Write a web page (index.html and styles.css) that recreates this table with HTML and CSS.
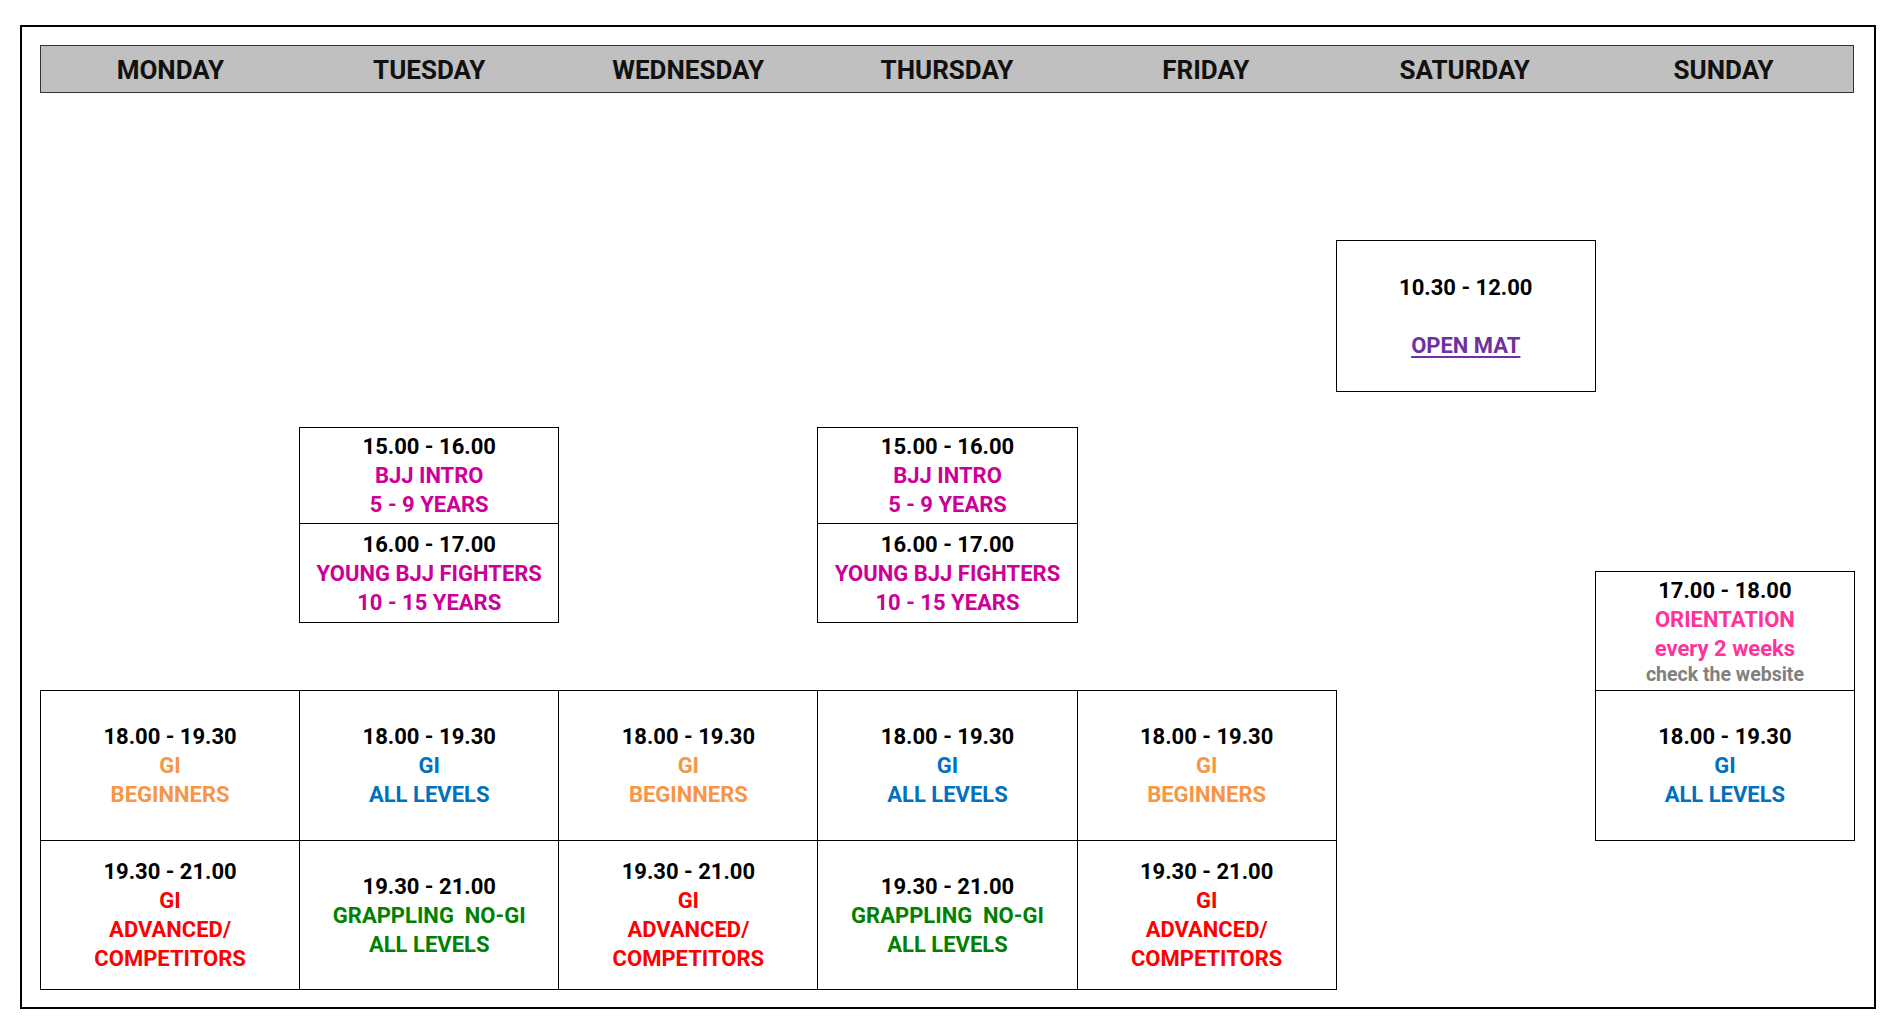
FILE: index.html
```html
<!DOCTYPE html>
<html lang="en">
<head>
<meta charset="utf-8">
<title>Timetable</title>
<link rel="stylesheet" href="styles.css">
</head>
<body>
<div class="frame">
  <div class="timetable">
    <div class="days">
      <div class="day">MONDAY</div>
      <div class="day">TUESDAY</div>
      <div class="day">WEDNESDAY</div>
      <div class="day">THURSDAY</div>
      <div class="day">FRIDAY</div>
      <div class="day">SATURDAY</div>
      <div class="day">SUNDAY</div>
    </div>

    <div class="cell sat s1030">
      <div class="time">10.30 - 12.00</div>
      <a class="open-mat">OPEN MAT</a>
    </div>

    <div class="cell tue s1500">
      <div class="time">15.00 - 16.00</div>
      <div class="kids">BJJ INTRO</div>
      <div class="kids">5 - 9 YEARS</div>
    </div>
    <div class="cell tue s1600">
      <div class="time">16.00 - 17.00</div>
      <div class="kids">YOUNG BJJ FIGHTERS</div>
      <div class="kids">10 - 15 YEARS</div>
    </div>
    <div class="cell thu s1500">
      <div class="time">15.00 - 16.00</div>
      <div class="kids">BJJ INTRO</div>
      <div class="kids">5 - 9 YEARS</div>
    </div>
    <div class="cell thu s1600">
      <div class="time">16.00 - 17.00</div>
      <div class="kids">YOUNG BJJ FIGHTERS</div>
      <div class="kids">10 - 15 YEARS</div>
    </div>

    <div class="cell sun s1700">
      <div class="time">17.00 - 18.00</div>
      <div class="orient">ORIENTATION</div>
      <div class="orient">every 2 weeks</div>
      <div class="note">check the website</div>
    </div>

    <div class="cell mon s1800">
      <div class="time">18.00 - 19.30</div>
      <div class="beg">GI</div>
      <div class="beg">BEGINNERS</div>
    </div>
    <div class="cell tue s1800">
      <div class="time">18.00 - 19.30</div>
      <div class="all">GI</div>
      <div class="all">ALL LEVELS</div>
    </div>
    <div class="cell wed s1800">
      <div class="time">18.00 - 19.30</div>
      <div class="beg">GI</div>
      <div class="beg">BEGINNERS</div>
    </div>
    <div class="cell thu s1800">
      <div class="time">18.00 - 19.30</div>
      <div class="all">GI</div>
      <div class="all">ALL LEVELS</div>
    </div>
    <div class="cell fri s1800">
      <div class="time">18.00 - 19.30</div>
      <div class="beg">GI</div>
      <div class="beg">BEGINNERS</div>
    </div>
    <div class="cell sun s1800">
      <div class="time">18.00 - 19.30</div>
      <div class="all">GI</div>
      <div class="all">ALL LEVELS</div>
    </div>

    <div class="cell mon s1930">
      <div class="time">19.30 - 21.00</div>
      <div class="adv">GI</div>
      <div class="adv">ADVANCED/</div>
      <div class="adv">COMPETITORS</div>
    </div>
    <div class="cell tue s1930">
      <div class="time">19.30 - 21.00</div>
      <div class="nogi">GRAPPLING&nbsp; NO-GI</div>
      <div class="nogi">ALL LEVELS</div>
    </div>
    <div class="cell wed s1930">
      <div class="time">19.30 - 21.00</div>
      <div class="adv">GI</div>
      <div class="adv">ADVANCED/</div>
      <div class="adv">COMPETITORS</div>
    </div>
    <div class="cell thu s1930">
      <div class="time">19.30 - 21.00</div>
      <div class="nogi">GRAPPLING&nbsp; NO-GI</div>
      <div class="nogi">ALL LEVELS</div>
    </div>
    <div class="cell fri s1930">
      <div class="time">19.30 - 21.00</div>
      <div class="adv">GI</div>
      <div class="adv">ADVANCED/</div>
      <div class="adv">COMPETITORS</div>
    </div>
  </div>
</div>
</body>
</html>
```

FILE: styles.css
```css
html, body {
  margin: 0;
  padding: 0;
  background: #fff;
}

body {
  font-family: Roboto, "Liberation Sans", sans-serif;
  font-weight: 700;
  color: #000;
}

.frame {
  margin: 25px 0 0 20px;
  width: 1815px;
  padding: 18px 19px 18px 18px;
  border: 2px solid #000;
}

.timetable {
  display: grid;
  grid-template-columns: repeat(7, 1fr);
  grid-template-rows: 48px 147px 151px 36px 96px 48px 51px 68px 150px 149px;
  width: 1814px;
}

.days {
  grid-column: 1 / -1;
  grid-row: 1;
  display: grid;
  grid-template-columns: repeat(7, 1fr);
  align-items: center;
  background: #bfc0bf;
  border: 1px solid #333;
  padding-top: 2px;
}

.day {
  text-align: center;
  font-size: 26px;
  color: #111;
}

.cell {
  border: 1px solid #000;
  margin: 0 -1px -1px 0;
  display: flex;
  flex-direction: column;
  justify-content: center;
  align-items: center;
  text-align: center;
  font-size: 22px;
  line-height: 29px;
}

.mon { grid-column: 1; }
.tue { grid-column: 2; }
.wed { grid-column: 3; }
.thu { grid-column: 4; }
.fri { grid-column: 5; }
.sat { grid-column: 6; }
.sun { grid-column: 7; }

.s1030 { grid-row: 3; }
.s1500 { grid-row: 5; }
.s1600 { grid-row: 6 / 8; }
.s1700 { grid-row: 7 / 9; }
.s1800 { grid-row: 9; }
.s1930 { grid-row: 10; }

.time { color: #000; }

.open-mat {
  margin-top: 29px;
  color: #7030a0;
  text-decoration: underline;
  text-underline-offset: 3px;
}

.kids { color: #cc0099; }
.orient { color: #ff3399; }
.note {
  color: #808080;
  font-size: 19.5px;
  line-height: 24px;
}
.beg { color: #f79646; }
.all { color: #0070c0; }
.adv { color: #ff0000; }
.nogi { color: #008000; }
```
